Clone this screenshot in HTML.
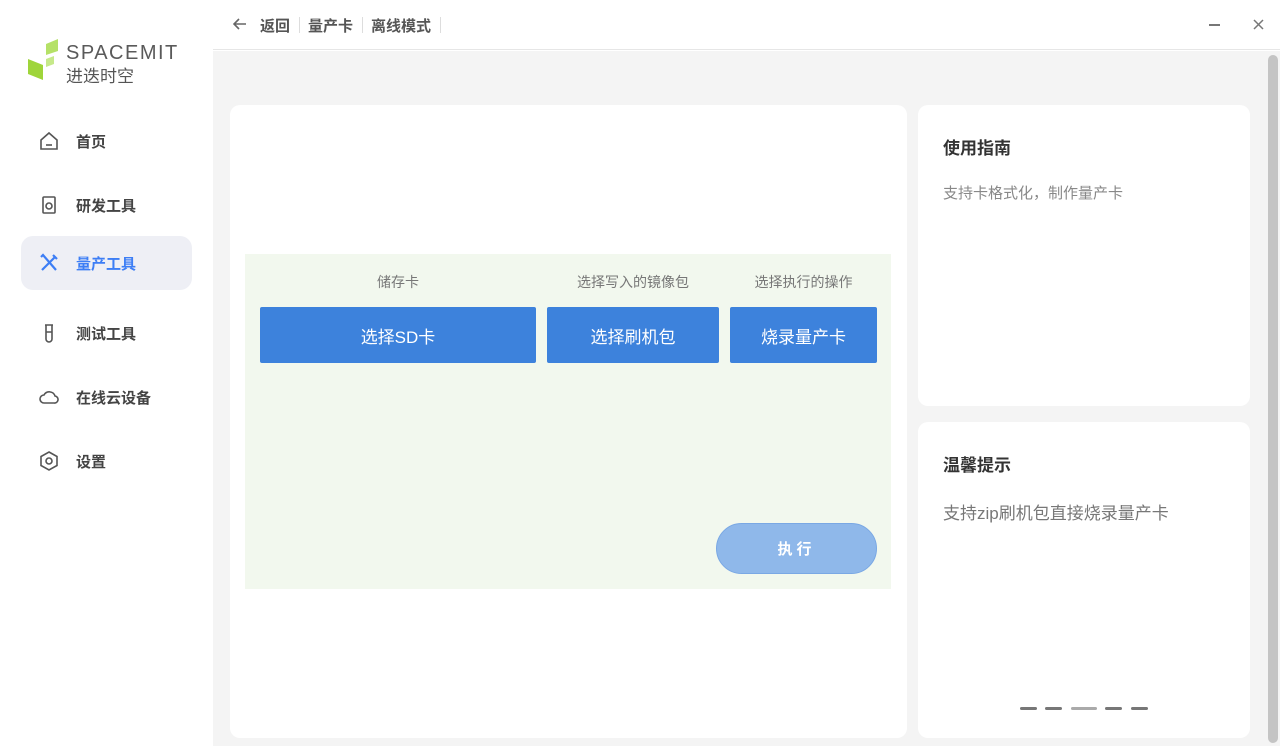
<!DOCTYPE html>
<html><head><meta charset="utf-8"><style>
*{margin:0;padding:0;box-sizing:border-box}
body{width:1280px;height:746px;overflow:hidden;background:#fff;font-family:"Liberation Sans","Noto Sans CJK SC",sans-serif;position:relative}
.side{position:absolute;left:0;top:0;width:213px;height:746px;background:#fff}
.nav{position:absolute;left:21px;width:171px;height:54px;border-radius:12px;display:flex;align-items:center;font-size:15px;font-weight:bold;color:#444}
.nav svg{position:absolute;left:18px;top:17px}
.nav span{position:absolute;left:55px}
.top{position:absolute;left:213px;top:0;width:1067px;height:50px;background:#fff;border-bottom:1px solid #e6e6e6}
.main{position:absolute;left:213px;top:51px;width:1067px;height:695px;background:#f4f4f4}
.card{position:absolute;background:#fff;border-radius:10px}
.btn{position:absolute;top:307px;height:56px;background:#3d82dc;color:#fff;font-size:17px;display:flex;align-items:center;justify-content:center;border-radius:2px}
.lbl{position:absolute;top:272px;font-size:14px;color:#777;text-align:center}
.dash{position:absolute;top:707px;height:3px;border-radius:2px;background:#777}
</style></head><body>
<div class="side">
  <svg style="position:absolute;left:27px;top:38px" width="34" height="44" viewBox="0 0 34 44">
    <polygon points="1,21 16,27 16,42 1,36" fill="#9fd53a"/>
    <polygon points="19,21 27,18 27,26 19,29" fill="#c6e98a"/>
    <polygon points="19,6 31,1 31,13 19,17" fill="#b5e167"/>
  </svg>
  <div style="position:absolute;left:66px;top:42px;font-size:20px;letter-spacing:1.5px;color:#5a5a5a">SPACEMIT</div>
  <div style="position:absolute;left:66px;top:62px;font-size:17px;color:#555">进迭时空</div>
  <div class="nav" style="top:114px"><svg width="20" height="20" viewBox="0 0 20 20" fill="none" stroke="#555" stroke-width="1.6"><path d="M2 9L10 2 18 9V18H2Z"/><path d="M7 14H13"/></svg><span>首页</span></div>
  <div class="nav" style="top:178px"><svg width="20" height="20" viewBox="0 0 20 20" fill="none" stroke="#555" stroke-width="1.6"><rect x="4" y="2" width="12" height="16" rx="1"/><circle cx="10" cy="11" r="3"/></svg><span>研发工具</span></div>
  <div class="nav" style="top:236px;background:#eeeff5;color:#3d7ef5"><svg width="20" height="20" viewBox="0 0 20 20" fill="none" stroke="#3d7ef5" stroke-width="2.2"><path d="M3 17L16 4M2 4L4 2 17 17M14 2L18 6"/></svg><span>量产工具</span></div>
  <div class="nav" style="top:306px"><svg width="20" height="20" viewBox="0 0 20 20" fill="none" stroke="#555" stroke-width="1.6"><path d="M6 2H14M7 2V16A3 3 0 0 0 13 16V2M7 9H13"/></svg><span>测试工具</span></div>
  <div class="nav" style="top:370px"><svg width="20" height="20" viewBox="0 0 20 20" fill="none" stroke="#555" stroke-width="1.6"><path d="M5 16A4 4 0 0 1 5 8A6 6 0 0 1 16 9A3.5 3.5 0 0 1 15 16Z"/></svg><span>在线云设备</span></div>
  <div class="nav" style="top:434px"><svg width="20" height="20" viewBox="0 0 20 20" fill="none" stroke="#555" stroke-width="1.6"><path d="M10 1L18 5.5V14.5L10 19 2 14.5V5.5Z"/><circle cx="10" cy="10" r="3"/></svg><span>设置</span></div>
</div>
<div class="top">
  <svg style="position:absolute;left:20px;top:17px" width="14" height="14" viewBox="0 0 14 14" fill="none" stroke="#666" stroke-width="1.6"><path d="M13 7H1M6 2L1 7 6 12"/></svg>
  <div style="position:absolute;left:47px;top:15px;font-size:15px;font-weight:bold;color:#555">返回</div>
  <div style="position:absolute;left:86px;top:17px;width:1px;height:16px;background:#ddd"></div>
  <div style="position:absolute;left:95px;top:15px;font-size:15px;font-weight:bold;color:#555">量产卡</div>
  <div style="position:absolute;left:149px;top:17px;width:1px;height:16px;background:#ddd"></div>
  <div style="position:absolute;left:158px;top:15px;font-size:15px;font-weight:bold;color:#555">离线模式</div>
  <div style="position:absolute;left:227px;top:17px;width:1px;height:16px;background:#ddd"></div>
  <div style="position:absolute;left:996px;top:24px;width:11px;height:1.5px;background:#777"></div>
  <svg style="position:absolute;left:1040px;top:19px" width="11" height="11" viewBox="0 0 11 11" stroke="#777" stroke-width="1.5"><path d="M1 1L10 10M10 1L1 10"/></svg>
</div>
<div class="main"></div>
<div style="position:absolute;left:1268px;top:55px;width:10px;height:688px;border-radius:5px;background:#c4c4c4"></div>
<div class="card" style="left:230px;top:105px;width:677px;height:633px"></div>
<div style="position:absolute;left:245px;top:254px;width:646px;height:335px;background:#f2f8ee"></div>
<div class="lbl" style="left:260px;width:276px">储存卡</div>
<div class="lbl" style="left:547px;width:172px">选择写入的镜像包</div>
<div class="lbl" style="left:730px;width:147px">选择执行的操作</div>
<div class="btn" style="left:260px;width:276px">选择SD卡</div>
<div class="btn" style="left:547px;width:172px">选择刷机包</div>
<div class="btn" style="left:730px;width:147px">烧录量产卡</div>
<div style="position:absolute;left:716px;top:523px;width:161px;height:51px;border-radius:26px;background:#8fb8ea;border:1px solid #7aa8e4;color:#fff;font-size:15px;font-weight:bold;letter-spacing:4px;display:flex;align-items:center;justify-content:center">执行</div>
<div class="card" style="left:918px;top:105px;width:332px;height:301px"></div>
<div style="position:absolute;left:943px;top:134px;font-size:17px;font-weight:bold;color:#333">使用指南</div>
<div style="position:absolute;left:943px;top:182px;font-size:15px;color:#888">支持卡格式化，制作量产卡</div>
<div class="card" style="left:918px;top:422px;width:332px;height:316px"></div>
<div style="position:absolute;left:943px;top:451px;font-size:17px;font-weight:bold;color:#333">温馨提示</div>
<div style="position:absolute;left:943px;top:499px;font-size:17px;color:#777">支持zip刷机包直接烧录量产卡</div>
<div class="dash" style="left:1020px;width:17px"></div>
<div class="dash" style="left:1045px;width:17px"></div>
<div class="dash" style="left:1071px;width:26px;background:#aaa"></div>
<div class="dash" style="left:1105px;width:17px"></div>
<div class="dash" style="left:1131px;width:17px"></div>
</body></html>
